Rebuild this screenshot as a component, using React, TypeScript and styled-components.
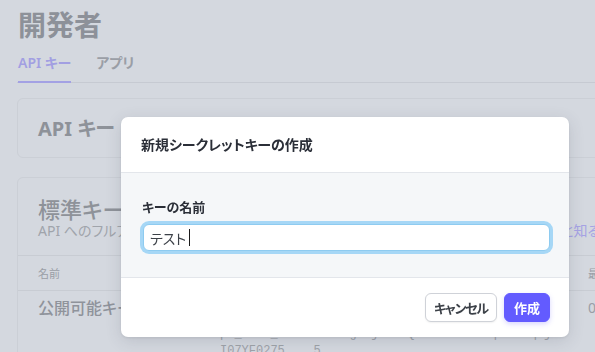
import styled, { createGlobalStyle } from 'styled-components';

const GlobalStyle = createGlobalStyle`
  html, body {
    margin: 0;
    padding: 0;
    background: #d4d8df;
    overflow: hidden;
  }
  body {
    font-family: 'Noto Sans', 'Noto Sans CJK JP', sans-serif;
    font-feature-settings: 'palt';
    width: 595px;
    height: 352px;
  }
  * {
    box-sizing: border-box;
  }
`;

const TABS = [
  { label: 'API キー', active: true },
  { label: 'アプリ', active: false },
];

export default function App() {
  return (
    <>
      <GlobalStyle />
      <Page>
        <PageTitle>開発者</PageTitle>
        <Tabs>
          {TABS.map((tab) => (
            <Tab key={tab.label} $active={tab.active}>
              {tab.label}
            </Tab>
          ))}
        </Tabs>

        <Card>
          <CardHead>
            <CardTitle>API キー</CardTitle>
          </CardHead>
        </Card>

        <Card $gap>
          <CardHead $large>
            <SectionTitle>標準キー</SectionTitle>
            <SubRow>
              <Subtitle>API へのフルアクセスを許可するキーです。</Subtitle>
              <MoreLink>もっと知る</MoreLink>
            </SubRow>
          </CardHead>
          <TableHeader>
            <HeadCell>名前</HeadCell>
            <HeadCell>トークン</HeadCell>
            <HeadCell>最終使用</HeadCell>
          </TableHeader>
          <TableRow>
            <NameCell>公開可能キー</NameCell>
            <TokenCell>
              pk_test_51KYoMx3b3gnYjsusuQ4wHmJsoUWnmpTkdNqVj
              <br />
              I07YF0275&nbsp;&nbsp;&nbsp;&nbsp;5
            </TokenCell>
            <DateCell>0 月 12 日</DateCell>
          </TableRow>
        </Card>
      </Page>

      <Dialog>
        <DialogHeader>
          <DialogTitle>新規シークレットキーの作成</DialogTitle>
        </DialogHeader>
        <DialogBody>
          <FieldLabel>キーの名前</FieldLabel>
          <InputBox>
            テスト
            <Caret />
          </InputBox>
        </DialogBody>
        <DialogFooter>
          <Button>キャンセル</Button>
          <Button $primary>作成</Button>
        </DialogFooter>
      </Dialog>
    </>
  );
}

const Page = styled.div`
  width: 621px;
  padding: 7px 0 0 17px;
  display: flex;
  flex-direction: column;
`;

const PageTitle = styled.h1`
  margin: 0 0 0 1px;
  font-size: 28px;
  line-height: 36px;
  font-weight: 700;
  color: #8d9199;
`;

const Tabs = styled.div`
  margin-top: 10px;
  display: flex;
  gap: 25px;
  padding-left: 1px;
  border-bottom: 1px solid #c6cad2;
`;

const Tab = styled.div<{ $active?: boolean }>`
  font-size: 14px;
  line-height: 20px;
  font-weight: 600;
  padding-bottom: 8px;
  margin-bottom: -1px;
  color: ${(p) => (p.$active ? '#a29fe2' : '#9a9ea6')};
  border-bottom: 2px solid ${(p) => (p.$active ? '#a3a1e4' : 'transparent')};
`;

const Card = styled.div<{ $gap?: boolean }>`
  margin-top: ${(p) => (p.$gap ? '19px' : '15px')};
  border: 1px solid #cbcfd6;
  border-radius: 6px;
  width: 100%;
`;

const CardHead = styled.div<{ $large?: boolean }>`
  padding: ${(p) => (p.$large ? '18px 20px 15px' : '16px 20px 14px')};
`;

const CardTitle = styled.h2`
  margin: 0;
  font-size: 20px;
  line-height: 28px;
  font-weight: 700;
  color: #8e9299;
`;

const SectionTitle = styled.h2`
  margin: 0;
  font-size: 22px;
  line-height: 26px;
  font-weight: 500;
  color: #8e9299;
`;

const SubRow = styled.div`
  display: flex;
  justify-content: space-between;
  font-size: 14px;
  line-height: 18px;
`;

const Subtitle = styled.span`
  color: #a0a4ab;
`;

const MoreLink = styled.span`
  color: #a6a3e4;
`;

const TableHeader = styled.div`
  display: grid;
  grid-template-columns: 182px 368px auto;
  padding-left: 20px;
  height: 36px;
  align-items: center;
  border-top: 1px solid #c8ccd3;
  border-bottom: 1px solid #c8ccd3;
`;

const HeadCell = styled.div`
  font-size: 11px;
  color: #9a9ea6;
  white-space: nowrap;
`;

const TableRow = styled.div`
  display: grid;
  grid-template-columns: 182px 368px auto;
  padding: 5px 0 0 20px;
  height: 80px;
`;

const NameCell = styled.div`
  font-size: 16px;
  line-height: 24px;
  font-weight: 500;
  color: #8f939b;
`;

const TokenCell = styled.div`
  padding-top: 30px;
  font-family: 'Liberation Mono', monospace;
  font-size: 12px;
  line-height: 17px;
  color: #9ea2a9;
  white-space: nowrap;
  overflow: hidden;
`;

const DateCell = styled.div`
  font-size: 14px;
  line-height: 24px;
  color: #9a9ea6;
  white-space: nowrap;
`;

const Dialog = styled.div`
  position: fixed;
  left: 121px;
  top: 117px;
  width: 448px;
  height: 220px;
  background: #ffffff;
  border-radius: 7px;
  overflow: hidden;
  display: flex;
  flex-direction: column;
  box-shadow: 0 4px 16px rgba(60, 66, 87, 0.16), 0 1px 3px rgba(0, 0, 0, 0.08);
`;

const DialogHeader = styled.div`
  height: 56px;
  padding: 0 20px;
  display: flex;
  align-items: center;
  border-bottom: 1px solid #e3e6eb;
`;

const DialogTitle = styled.h3`
  margin: 0;
  font-size: 14px;
  line-height: 20px;
  font-weight: 700;
  color: #2b2f38;
`;

const DialogBody = styled.div`
  background: #f5f7f9;
  padding: 25px 19px 26px 19px;
  border-bottom: 1px solid #e3e6eb;
  display: flex;
  flex-direction: column;
`;

const FieldLabel = styled.label`
  font-size: 13px;
  line-height: 18px;
  font-weight: 700;
  color: #2b2f38;
  margin-left: 2px;
`;

const InputBox = styled.div`
  margin: 8px 0 0 3px;
  height: 27px;
  background: #ffffff;
  border: 1px solid #8ecbf0;
  border-radius: 6px;
  box-shadow: 0 0 0 3px #a6d7f6;
  padding: 0 6px;
  display: flex;
  align-items: center;
  font-size: 14px;
  color: #3c4148;
`;

const Caret = styled.span`
  display: inline-block;
  width: 1px;
  height: 17px;
  margin-left: 3px;
  background: #1a1a1a;
`;

const DialogFooter = styled.div`
  flex: 1;
  display: flex;
  justify-content: flex-end;
  align-items: center;
  gap: 7px;
  padding: 0 19px 0;
`;

const Button = styled.button<{ $primary?: boolean }>`
  height: 29px;
  padding: 0 ${(p) => (p.$primary ? '9px' : '8px')};
  border-radius: 6px;
  font-family: inherit;
  font-feature-settings: 'palt';
  font-size: 13px;
  font-weight: 700;
  letter-spacing: ${(p) => (p.$primary ? '0' : '-1.2px')};
  border: 1px solid ${(p) => (p.$primary ? '#635bff' : '#cfd2d8')};
  background: ${(p) => (p.$primary ? '#635bff' : '#ffffff')};
  color: ${(p) => (p.$primary ? '#ffffff' : '#3c4148')};
  box-shadow: ${(p) =>
    p.$primary ? '0 2px 5px rgba(99, 91, 255, 0.25)' : '0 1px 2px rgba(0, 0, 0, 0.06)'};
`;
